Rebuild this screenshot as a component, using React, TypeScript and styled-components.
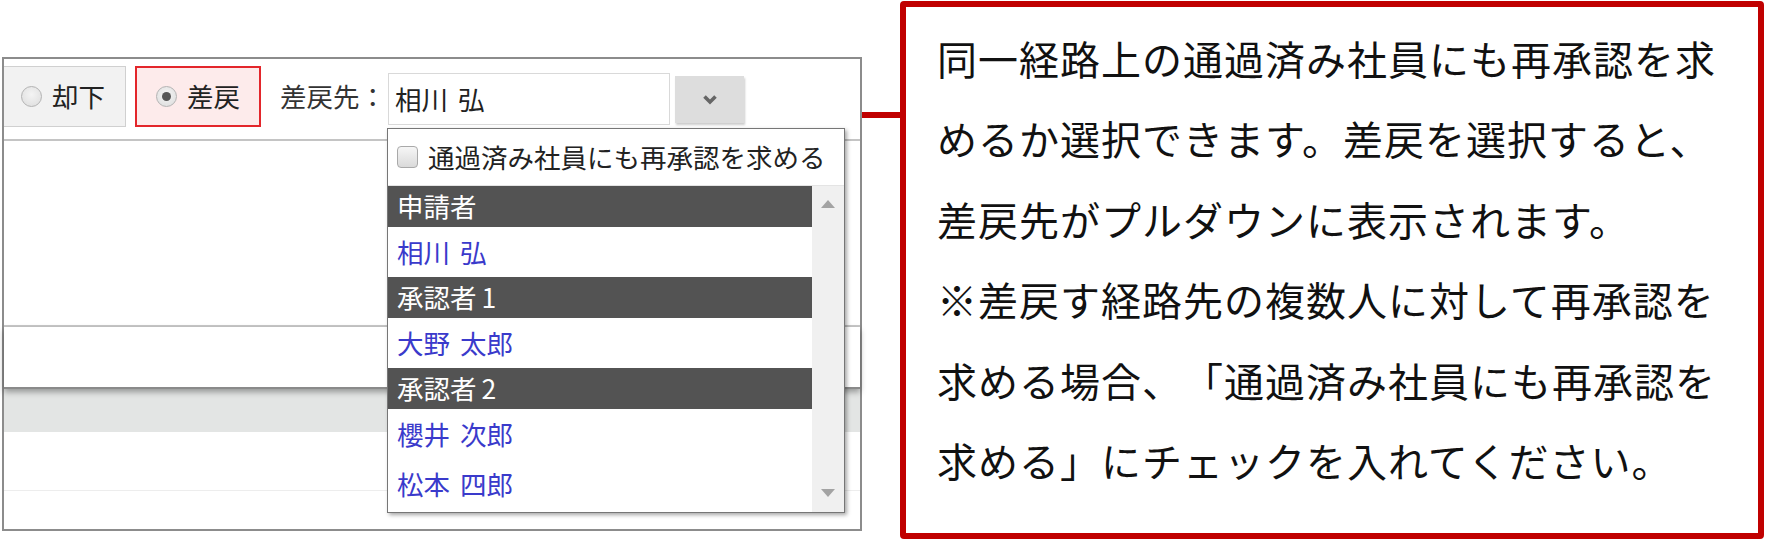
import React from "react";
import styled, { createGlobalStyle } from "styled-components";

const Global = createGlobalStyle`
  html, body { margin: 0; padding: 0; background: #ffffff; }
  body { font-family: "Noto Sans CJK JP", "Noto Sans", sans-serif; color: #333; }
  * { box-sizing: border-box; }
`;

const Page = styled.div`
  display: flex;
  align-items: flex-start;
  width: 1765px;
  height: 540px;
  overflow: hidden;
`;

const ShotColumn = styled.div`
  padding: 57px 0 0 2px;
`;

const Panel = styled.div`
  position: relative;
  width: 860px;
  height: 474px;
  border: 2px solid #8c8c8c;
  display: flex;
  flex-direction: column;
  background: #fff;
`;

const Toolbar = styled.div`
  display: flex;
  align-items: center;
  height: 82px;
  padding-bottom: 6px;
  border-bottom: 2px solid #c4c4c4;
  font-size: 26.5px;
  word-spacing: 4px;
`;

const Choice = styled.div<{ $active?: boolean }>`
  display: flex;
  align-items: center;
  gap: 10px;
  height: 61px;
  width: ${(p) => (p.$active ? "126px" : "122px")};
  margin-left: ${(p) => (p.$active ? "9px" : "0")};
  padding-left: ${(p) => (p.$active ? "19px" : "17px")};
  background: ${(p) => (p.$active ? "#fdebeb" : "#f2f2f2")};
  border: ${(p) => (p.$active ? "2px solid #e3262b" : "1px solid #d0d0d0")};
  border-left-style: ${(p) => (p.$active ? "solid" : "none")};
  color: #222;
  line-height: 1;
`;

const Radio = styled.span<{ $checked?: boolean }>`
  position: relative;
  flex: none;
  width: 21px;
  height: 21px;
  border-radius: 50%;
  border: 1px solid #b3b3b3;
  background: radial-gradient(circle at 50% 40%, #f4f4f4 0%, #dcdcdc 100%);
  &::after {
    content: "";
    display: ${(p) => (p.$checked ? "block" : "none")};
    position: absolute;
    left: 5px;
    top: 5px;
    width: 9px;
    height: 9px;
    border-radius: 50%;
    background: #555;
  }
`;

const FieldLabel = styled.span`
  margin-left: 19px;
  margin-right: 2px;
  color: #333;
  line-height: 1;
`;

const Input = styled.div`
  width: 282px;
  height: 52px;
  margin-top: 5px;
  padding-left: 6px;
  border: 1px solid #d9d9d9;
  line-height: 50px;
  color: #222;
  background: #fff;
`;

const DropButton = styled.div`
  display: flex;
  align-items: center;
  justify-content: center;
  width: 69px;
  height: 47px;
  margin-left: 5px;
  margin-top: 6px;
  background: #dddddd;
  box-shadow: 1px 2px 2px rgba(0, 0, 0, 0.2);
`;

const Band = styled.div<{ $h: number; $bg?: string; $line?: string; $lw?: number; $shadow?: boolean }>`
  position: relative;
  flex: none;
  height: ${(p) => p.$h}px;
  background: ${(p) => p.$bg || "#fff"};
  border-bottom: ${(p) => (p.$line ? `${p.$lw || 1}px solid ${p.$line}` : "none")};
  box-shadow: ${(p) => (p.$shadow ? "0 3px 6px rgba(0,0,0,0.35)" : "none")};
  z-index: ${(p) => (p.$shadow ? 1 : 0)};
`;

const Filler = styled.div`
  flex: 1;
  background: #fff;
`;

const Dropdown = styled.div`
  position: absolute;
  left: 383px;
  top: 69px;
  width: 458px;
  height: 385px;
  border: 1px solid #767676;
  background: #fff;
  box-shadow: 2px 2px 4px rgba(0, 0, 0, 0.35);
  z-index: 3;
  display: flex;
  flex-direction: column;
  font-size: 26.5px;
`;

const CheckRow = styled.div`
  display: flex;
  align-items: center;
  gap: 10px;
  height: 57px;
  padding-left: 9px;
  border-bottom: 1px solid #e4e4e4;
  color: #222;
  line-height: 1;
`;

const CheckBox = styled.span`
  flex: none;
  width: 21px;
  height: 22px;
  border-radius: 4px;
  border: 1px solid #a9a9a9;
  background: linear-gradient(#f6f6f6, #dadada);
`;

const ListArea = styled.div`
  display: flex;
  height: 326px;
`;

const Items = styled.div`
  flex: 1;
  display: flex;
  flex-direction: column;
`;

const GroupHeader = styled.div`
  height: 41px;
  padding-left: 9px;
  display: flex;
  align-items: center;
  background: #535353;
  color: #fff;
  line-height: 1;
  word-spacing: -1px;
`;

const Person = styled.div`
  height: 50px;
  padding-left: 9px;
  display: flex;
  align-items: center;
  color: #3a3acb;
  line-height: 1;
  word-spacing: 4px;
`;

const Scrollbar = styled.div`
  flex: none;
  width: 32px;
  background: #f0f0f0;
  display: flex;
  flex-direction: column;
  justify-content: space-between;
  align-items: center;
  padding: 14px 0 15px;
`;

const Connector = styled.div`
  flex: none;
  width: 38px;
  height: 6px;
  margin-top: 112px;
  background: #c00000;
`;

const Callout = styled.div`
  flex: none;
  width: 864px;
  height: 538px;
  margin-top: 1px;
  border: 6px solid #c00000;
  border-radius: 4px;
  padding: 10.5px 0 0 31px;
  background: #fff;
  font-family: "Noto Sans CJK JP", sans-serif;
  font-size: 40px;
  letter-spacing: 1px;
  color: #111;
  text-spacing-trim: space-all;
`;

const CalloutLine = styled.div`
  height: 80.5px;
  line-height: 80.5px;
  white-space: nowrap;
`;

const Chevron = () => (
  <svg width="16" height="11" viewBox="0 0 16 11">
    <polyline points="2.5,2.5 8,8 13.5,2.5" fill="none" stroke="#666" strokeWidth="3.6" strokeLinejoin="miter" />
  </svg>
);

const Arrow = ({ up }: { up?: boolean }) => (
  <svg width="14" height="8" viewBox="0 0 14 8">
    <polygon points={up ? "0,8 7,0 14,8" : "0,0 14,0 7,8"} fill="#a3a3a3" />
  </svg>
);

const lines = [
  "同一経路上の通過済み社員にも再承認を求",
  "めるか選択できます。差戻を選択すると、",
  "差戻先がプルダウンに表示されます。",
  "※差戻す経路先の複数人に対して再承認を",
  "求める場合、「通過済み社員にも再承認を",
  "求める」にチェックを入れてください。",
];

export default function App() {
  return (
    <>
      <Global />
      <Page>
        <ShotColumn>
          <Panel>
            <Toolbar>
              <Choice>
                <Radio />
                <span>却下</span>
              </Choice>
              <Choice $active>
                <Radio $checked />
                <span>差戻</span>
              </Choice>
              <FieldLabel>差戻先：</FieldLabel>
              <Input>相川 弘</Input>
              <DropButton>
                <Chevron />
              </DropButton>
            </Toolbar>
            <Band $h={186} $line="#c8c8c8" $lw={2} />
            <Band $h={62} $line="#8a8a8a" $lw={2} $shadow />
            <Band $h={43} $bg="#e3e5e4" />
            <Band $h={59} $line="#ededed" />
            <Filler />
            <Dropdown>
              <CheckRow>
                <CheckBox />
                <span>通過済み社員にも再承認を求める</span>
              </CheckRow>
              <ListArea>
                <Items>
                  <GroupHeader>申請者</GroupHeader>
                  <Person>相川 弘</Person>
                  <GroupHeader>承認者 1</GroupHeader>
                  <Person>大野 太郎</Person>
                  <GroupHeader>承認者 2</GroupHeader>
                  <Person>櫻井 次郎</Person>
                  <Person>松本 四郎</Person>
                </Items>
                <Scrollbar>
                  <Arrow up />
                  <Arrow />
                </Scrollbar>
              </ListArea>
            </Dropdown>
          </Panel>
        </ShotColumn>
        <Connector />
        <Callout>
          {lines.map((l) => (
            <CalloutLine key={l}>{l}</CalloutLine>
          ))}
        </Callout>
      </Page>
    </>
  );
}
